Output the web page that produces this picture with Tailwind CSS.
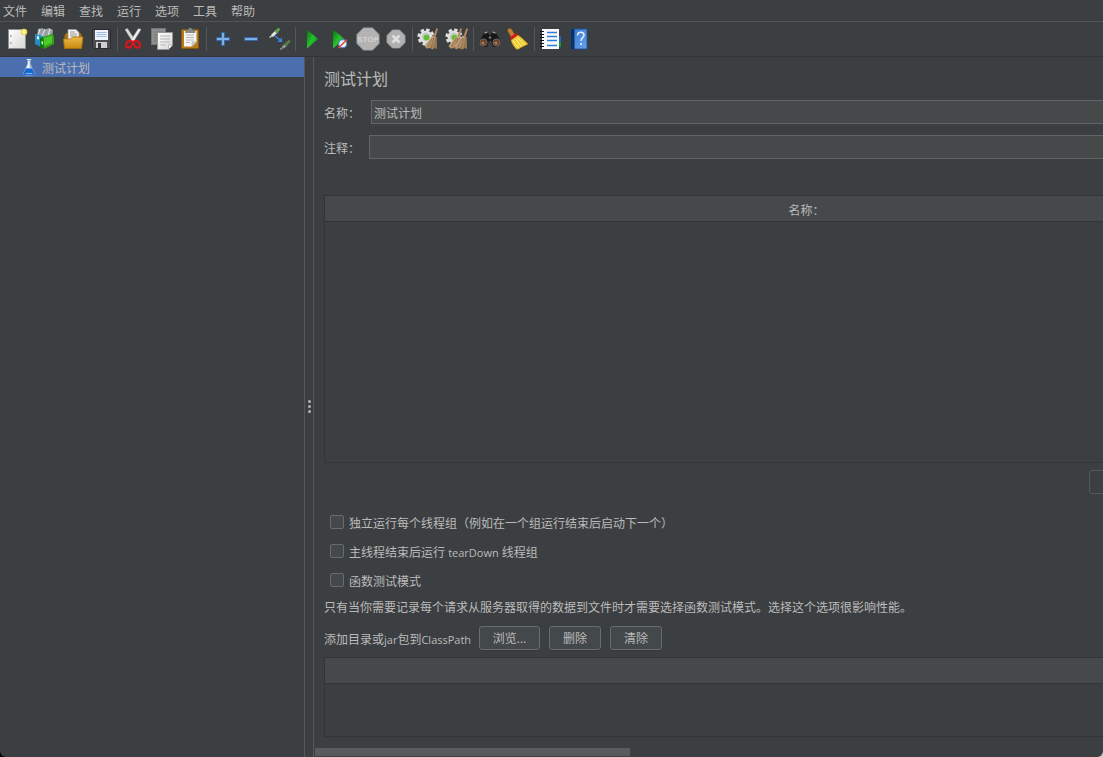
<!DOCTYPE html>
<html lang="zh-CN">
<head>
<meta charset="utf-8">
<meta name="viewport" content="width=device-width, initial-scale=1">
<title>测试计划</title>
<script src="https://cdn.jsdelivr.net/npm/@tailwindcss/browser@4"></script>
</head>
<body class="bg-linear-to-r from-black from-50% to-[#c8c8c8] to-50% font-['Open_Sans','Noto_Sans_CJK_SC',sans-serif] text-xs text-[#bbbbbb]">
<div class="flex h-screen flex-col overflow-hidden rounded-b-md bg-[#3c3f41]">

  <nav class="flex h-[22px] shrink-0 items-center gap-[14px] border-b border-[#515354] pt-[2px] pl-[3px]">
    <button type="button">文件</button>
    <button type="button">编辑</button>
    <button type="button">查找</button>
    <button type="button">运行</button>
    <button type="button">选项</button>
    <button type="button">工具</button>
    <button type="button">帮助</button>
  </nav>

  <div role="toolbar" aria-label="工具栏" class="flex shrink-0 items-center border-b border-[#323435] px-[3px] py-[3px]">
    <svg class="absolute size-0" aria-hidden="true">
      <defs>
        <linearGradient id="paper" x1="0" y1="0" x2="1" y2="1"><stop offset="0" stop-color="#fff"/><stop offset="1" stop-color="#d6d6d6"/></linearGradient>
        <linearGradient id="gold" x1="0" y1="0" x2="0" y2="1"><stop offset="0" stop-color="#ecb848"/><stop offset="1" stop-color="#c98a10"/></linearGradient>
        <linearGradient id="green" x1="0" y1="0" x2="1" y2="1"><stop offset="0" stop-color="#0a6e10"/><stop offset=".5" stop-color="#25c32c"/><stop offset="1" stop-color="#067a0c"/></linearGradient>
        <linearGradient id="straw" x1="0" y1="0" x2="1" y2="1"><stop offset="0" stop-color="#d9bd94"/><stop offset="1" stop-color="#94704a"/></linearGradient>
        <linearGradient id="blue" x1="0" y1="0" x2="1" y2="1"><stop offset="0" stop-color="#3577cf"/><stop offset="1" stop-color="#67a2ec"/></linearGradient>
        <g id="gear">
          <circle cx="11" cy="12" r="6.500" fill="#dfe1df"/>
          <circle cx="11" cy="12" r="7.300" fill="none" stroke="#dfe1df" stroke-width="2.600" stroke-dasharray="3.400 2.330"/>
          <circle cx="11" cy="12" r="4.200" fill="#c3c8c1"/>
          <circle cx="11.500" cy="12.500" r="2.800" fill="#5cc12a"/>
        </g>
        <g id="brush">
          <path d="M21.500 3l1.500 1-2.500 8-2-1z" fill="#b08a60"/>
          <path d="M17.500 10.500l4 2 .5 11.500-2.500-1-2 1.500-2.500-1.500-3.500.5-2-2.500z" fill="url(#straw)"/>
          <path d="M17.500 13l-5 9M19 13l-3 10M20.500 13.500l-1 9.500" stroke="#7d5b36" stroke-width=".6" fill="none"/>
        </g>
      </defs>
    </svg>

    <button type="button" aria-label="新建" class="size-7 shrink-0"><svg viewBox="0 0 28 28" class="size-7">
      <rect x="5.500" y="4.500" width="17" height="19" fill="url(#paper)" stroke="#8e8f88"/>
      <path d="M7 10h1.500v2H7zM7 17h1.500v2H7z" fill="#aaa"/>
      <circle cx="21" cy="7" r="3.300" fill="#f0dc50"/><circle cx="21" cy="7" r="1.500" fill="#fffbd0"/>
    </svg></button>
    <button type="button" aria-label="模板" class="size-7 shrink-0"><svg viewBox="0 0 28 28" class="size-7">
      <path d="M7 4l5-1 1 2 5-2 4 2-1 8H6z" fill="#9aa1a4"/><path d="M9 4l-2 6M14 4l-3 7M19 4l-2 7" stroke="#d6dcde" stroke-width="1.200"/>
      <path d="M4 9l8 2v12l-8-4z" fill="#2190c8"/><path d="M6 11l2 .5v3L6 14z" fill="#eaf6fc"/>
      <path d="M9 13l4-1v11.500L9 22z" fill="#0d7a0d"/>
      <path d="M12 12l9-3 2 2v8l-10 5z" fill="#2fa016"/><path d="M13 13l8-2.500V18l-8 3z" fill="#4fc92a"/><path d="M10.500 16l1.500.500v3l-1.500-.500z" fill="#e5f8dc"/>
    </svg></button>
    <button type="button" aria-label="打开" class="size-7 shrink-0"><svg viewBox="0 0 28 28" class="size-7">
      <path d="M5.500 10l2-2h14l1.500 3v11h-17.500z" fill="#a8720c"/>
      <path d="M9 4.500h8l3 3V15H9z" fill="#f3f3f3" stroke="#999" stroke-width=".7"/>
      <path d="M11 7h5M11 9h7M11 11h7" stroke="#9a9a9a"/>
      <path d="M4.500 14h7l2-2H24l-1.500 11.500h-17z" fill="url(#gold)" stroke="#a8720c" stroke-width=".8"/>
    </svg></button>
    <button type="button" aria-label="保存" class="size-7 shrink-0"><svg viewBox="0 0 28 28" class="size-7">
      <path d="M5.500 4.500h18v19h-16l-2-2z" fill="#4b4d52" stroke="#292b30"/>
      <rect x="8" y="5" width="13" height="10" fill="#eef4fb"/><path d="M9.500 7.500h10M9.500 9.500h10M9.500 11.500h10" stroke="#9fbbdc"/>
      <rect x="9" y="17" width="11" height="6" fill="#cfcfcf"/><rect x="11" y="18" width="3" height="5" fill="#33353a"/>
    </svg></button>

    <span class="flex h-7 w-[5px] shrink-0 items-center justify-center"><span class="h-6 w-px bg-[#55585a]"></span></span>

    <button type="button" aria-label="剪切" class="size-7 shrink-0"><svg viewBox="0 0 28 28" class="size-7">
      <path d="M5 4.500L7.500 3.500 15 15l-2 2.500z" fill="#dcdedc" stroke="#9ea09e" stroke-width=".5"/>
      <path d="M21 4.500L18.500 3.500 11 15l2 2.500z" fill="#f0f1f0" stroke="#9ea09e" stroke-width=".5"/>
      <path d="M12 16.500c-3-1.500-6 .5-6 3.500 0 3.500 4.500 3.500 5.500.5l1.500-3.500zM14 16.500c3-1.500 6 .5 6 3.500 0 3.500-4.500 3.500-5.500.5L13 17z" fill="none" stroke="#d8141c" stroke-width="2.200"/>
    </svg></button>
    <button type="button" aria-label="复制" class="size-7 shrink-0"><svg viewBox="0 0 28 28" class="size-7">
      <rect x="3.500" y="3.500" width="14" height="16" fill="#8e9090" stroke="#757777"/><path d="M6 7h9M6 10h5M6 13h5M6 16h4" stroke="#747676"/>
      <path d="M9.500 7.500h15V20l-4 4.500h-11z" fill="url(#paper)" stroke="#96968f"/>
      <path d="M12 11h10M12 14h10M12 17h10M12 20h6" stroke="#b6b6b6"/><path d="M24.500 20h-4v4.500z" fill="#fff" stroke="#a5a5a5" stroke-width=".7"/>
    </svg></button>
    <button type="button" aria-label="粘贴" class="size-7 shrink-0"><svg viewBox="0 0 28 28" class="size-7">
      <rect x="5.500" y="4.500" width="17" height="19" rx="1" fill="#b97a18" stroke="#8a5608"/>
      <path d="M8 6h12.500v11L16 21.500H8z" fill="#f5f5f3"/><path d="M20.500 17L16 21.500V17z" fill="#cfcfcf" stroke="#999" stroke-width=".5"/>
      <path d="M10 10h8M10 12.500h8M10 15h8M10 17.500h4" stroke="#b5b5b5"/>
      <path d="M9.500 7.500l1-3h2l.5-1.500h2.500l.5 1.500h2l1 3z" fill="#888a85" stroke="#62645f" stroke-width=".6"/>
    </svg></button>

    <span class="flex h-7 w-[5px] shrink-0 items-center justify-center"><span class="h-6 w-px bg-[#55585a]"></span></span>

    <button type="button" aria-label="展开全部" class="size-7 shrink-0"><svg viewBox="0 0 28 28" class="size-7">
      <path d="M12.500 7.500h3v5h5v3h-5v5h-3v-5h-5v-3h5z" fill="#7fb0e4" stroke="#3465a8"/>
    </svg></button>
    <button type="button" aria-label="折叠全部" class="size-7 shrink-0"><svg viewBox="0 0 28 28" class="size-7">
      <rect x="7.500" y="12.500" width="13" height="3" fill="#7fb0e4" stroke="#3465a8"/>
    </svg></button>
    <button type="button" aria-label="切换" class="size-7 shrink-0"><svg viewBox="0 0 28 28" class="size-7">
      <path d="M4.500 12.500l3-2" stroke="#d8d8d8" stroke-width="1.300"/><path d="M7 11l5-5" stroke="#e3eadf" stroke-width="3"/><path d="M11.500 6.500l2-2" stroke="#66a04a" stroke-width="3" stroke-linecap="round"/>
      <path d="M10 11l5 4" stroke="#3d86e8" stroke-width="1.500"/><path d="M17 12.500V17h-4.500z" fill="#3d86e8"/>
      <g opacity=".6"><path d="M15 24.500l3-2" stroke="#d8d8d8" stroke-width="1.300"/><path d="M18 22.500l4-4" stroke="#d0d6cc" stroke-width="3"/><path d="M21 19.500l3-3" stroke="#66a04a" stroke-width="3" stroke-linecap="round"/></g>
    </svg></button>

    <span class="flex h-7 w-[5px] shrink-0 items-center justify-center"><span class="h-6 w-px bg-[#55585a]"></span></span>

    <button type="button" aria-label="启动" class="size-7 shrink-0"><svg viewBox="0 0 28 28" class="size-7">
      <path d="M9 4.500L20 14 9 23.500z" fill="url(#green)"/>
    </svg></button>
    <button type="button" aria-label="不停顿开始" class="size-7 shrink-0"><svg viewBox="0 0 28 28" class="size-7">
      <path d="M7 4.500L18.500 14 7 23.500z" fill="url(#green)"/>
      <circle cx="16.700" cy="18.700" r="4" fill="#e9eff8" stroke="#5b86c4" stroke-width="1.200"/><path d="M12.500 23l8.500-8.500" stroke="#e04434" stroke-width="1.400"/>
    </svg></button>
    <button type="button" aria-label="停止" disabled class="size-7 shrink-0"><svg viewBox="0 0 28 28" class="size-7">
      <path d="M9.500 3h9L25 9.500v9L18.500 25h-9L3 18.500v-9z" fill="#b3b3b3" stroke="#a3a3a3"/>
      <text x="14" y="17" text-anchor="middle" font-family="Liberation Sans" font-size="8" font-weight="700" fill="#d2d2d2">STOP</text>
    </svg></button>
    <button type="button" aria-label="关闭" disabled class="size-7 shrink-0"><svg viewBox="0 0 28 28" class="size-7">
      <path d="M10.500 5h7L23 10.500v7L17.500 23h-7L5 17.500v-7z" fill="#b1b1b1" stroke="#a1a1a1" stroke-width=".8"/>
      <path d="M10.500 10.500l7 7M17.500 10.500l-7 7" stroke="#e0e0e0" stroke-width="2.600"/>
    </svg></button>

    <span class="flex h-7 w-[5px] shrink-0 items-center justify-center"><span class="h-6 w-px bg-[#55585a]"></span></span>

    <button type="button" aria-label="清除" class="size-7 shrink-0"><svg viewBox="0 0 28 28" class="size-7">
      <use href="#gear"/><use href="#brush"/>
    </svg></button>
    <button type="button" aria-label="清除全部" class="size-7 shrink-0"><svg viewBox="0 0 28 28" class="size-7">
      <use href="#gear"/><use href="#brush" x="-4"/><use href="#brush" x="2"/>
    </svg></button>

    <span class="flex h-7 w-[5px] shrink-0 items-center justify-center"><span class="h-6 w-px bg-[#55585a]"></span></span>

    <button type="button" aria-label="搜索" class="size-7 shrink-0"><svg viewBox="0 0 28 28" class="size-7">
      <path d="M8 8l4-1 1 3h2l1-3 4 1 5 9-4 5h-4l-2-6h-2l-2 6H7l-4-5z" fill="#171717"/>
      <path d="M8.500 8l3-.8M16.500 7.200l3 .8" stroke="#9a9a9a" stroke-width="1.300"/>
      <circle cx="7.500" cy="17.500" r="3.600" fill="#6b4029" stroke="#6a6a6a"/><circle cx="20.500" cy="17.500" r="3.600" fill="#6b4029" stroke="#6a6a6a"/>
      <circle cx="7" cy="18" r="1.500" fill="#b07a55"/><circle cx="20" cy="18" r="1.500" fill="#b07a55"/><circle cx="14" cy="12.500" r="1.300" fill="#777"/>
    </svg></button>
    <button type="button" aria-label="重置搜索" class="size-7 shrink-0"><svg viewBox="0 0 28 28" class="size-7">
      <path d="M3.500 5.500C4 3 7 3 8 5l3 5-4 2z" fill="#c08034" stroke="#8d5413" stroke-width=".6"/>
      <path d="M7 15l7-5c4 3 7 6 10 9l-11 5.500c-3-2-5-6-6-9.500z" fill="#efcb35" stroke="#b8900c" stroke-width=".6"/>
      <path d="M9 15.500l6 8M11.500 14l6 7.500M13.500 12.500l7 7.500" stroke="#fff09a" stroke-width="1" fill="none"/>
      <path d="M6 12.500l6-4.500 2 2-7 5z" fill="#d8191c"/>
    </svg></button>

    <span class="flex h-7 w-[5px] shrink-0 items-center justify-center"><span class="h-6 w-px bg-[#55585a]"></span></span>

    <button type="button" aria-label="函数助手" class="size-7 shrink-0"><svg viewBox="0 0 28 28" class="size-7">
      <path d="M20 11h4v7h-4z" fill="#1e62e0"/><path d="M20 17h4v5h-4z" fill="#189a28"/>
      <rect x="5" y="4" width="17" height="20" fill="#fafafa"/>
      <path d="M10 7.500h10M10 11.500h10M10 15.500h10M10 20.500h10" stroke="#2f7bdc" stroke-width="1.400"/>
      <path d="M3 6.500h4M3 9.500h4M3 12.500h4M3 15.500h4M3 18.500h4M3 21.500h4" stroke="#111" stroke-width="1.200"/>
    </svg></button>
    <button type="button" aria-label="帮助" class="size-7 shrink-0"><svg viewBox="0 0 28 28" class="size-7">
      <rect x="6" y="4" width="16" height="20" fill="url(#blue)" stroke="#1c4c8e" stroke-width=".8"/><path d="M6 4h3.500v20H6z" fill="#0d3268"/>
      <path d="M12.500 10.500c0-4.500 6.500-4 6.500-.5 0 2.800-3 2.500-3 6" fill="none" stroke="#e6f0fc" stroke-width="1.500"/><circle cx="16" cy="19" r="1.100" fill="#e6f0fc"/>
    </svg></button>
  </div>

  <div class="flex min-h-0 flex-1">
    <aside class="w-[304px] shrink-0">
      <ul role="tree" aria-label="测试计划树">
        <li role="treeitem" aria-selected="true" class="flex h-5 items-center gap-[6px] bg-[#4b6eaf] pl-[22px]">
          <svg viewBox="0 0 14 18" class="h-[18px] w-[14px]" aria-hidden="true">
            <path d="M5.500 2h3v4l4.500 10c0 .8-1.500 1.300-6 1.300s-6-.5-6-1.300l4.500-10z" fill="#a9c4e6" stroke="#7f9cc4" stroke-width=".6"/>
            <path d="M3.800 10.500h6.400l2.600 5.700c0 .5-1.300.8-5.800.8s-5.800-.3-5.800-.8z" fill="#1568d0"/>
            <path d="M6 3h1.500v7H4.500l1.500-4z" fill="#f3f7fb"/><path d="M4.800 1.500h4.400" stroke="#dfe8f2"/><path d="M3.500 15.500h7" stroke="#7db4f2" stroke-width="1.200"/>
          </svg>
          <span class="pt-[3px]">测试计划</span>
        </li>
      </ul>
    </aside>

    <div role="separator" aria-orientation="vertical" class="flex w-[10px] shrink-0 flex-col items-center justify-center gap-[2px] border-x border-[#555759] pb-[2px]">
      <span class="size-[3px] rounded-full bg-[#b4b4b4]"></span>
      <span class="size-[3px] rounded-full bg-[#b4b4b4]"></span>
      <span class="size-[3px] rounded-full bg-[#b4b4b4]"></span>
    </div>

    <main class="flex min-w-0 flex-1 flex-col overflow-hidden">
      <div class="flex min-h-0 min-w-[1938px] flex-1 flex-col pt-3 pl-[10px]">
        <h1 class="text-base leading-5">测试计划</h1>
        <div class="mt-[11px] flex h-6 items-center">
          <label for="name" class="w-[47px] pt-[3px]">名称：</label>
          <input id="name" type="text" value="测试计划" class="h-6 min-w-0 flex-1 border border-[#646464] bg-[#45494a] px-[2px] pt-[2px] outline-none">
        </div>
        <div class="mt-[11px] flex h-6 items-center">
          <label for="comment" class="w-[45px] pt-[3px]">注释：</label>
          <input id="comment" type="text" class="h-6 min-w-0 flex-1 border border-[#646464] bg-[#45494a] px-[2px] pt-[2px] outline-none">
        </div>

        <div class="mt-9 min-h-0 flex-1 border border-[#323537]">
          <table class="w-full table-fixed border-separate border-spacing-0">
            <thead>
              <tr>
                <th scope="col" class="h-[26px] border-b border-[#323537] bg-[#45494b] p-0 pt-1 font-normal leading-5">名称：</th>
                <td class="h-[26px] border-b border-[#323537] bg-[#45494b] p-0"></td>
              </tr>
            </thead>
          </table>
        </div>
        <div class="mt-[7px] flex h-6 justify-center">
          <div class="w-[398px]">
            <button type="button" disabled aria-label="详细" class="h-6 w-[52px] rounded-[3px] border border-[#55585a]"></button>
          </div>
        </div>

        <div class="mt-[18px] flex flex-col gap-[9px] pl-[6px]">
          <label class="flex h-5 items-center gap-[5px]"><input type="checkbox" class="size-[14px] appearance-none rounded-xs border border-[#6b6b6b] bg-[#43494a]"><span class="pt-[3px]">独立运行每个线程组（例如在一个组运行结束后启动下一个）</span></label>
          <label class="flex h-5 items-center gap-[5px]"><input type="checkbox" class="size-[14px] appearance-none rounded-xs border border-[#6b6b6b] bg-[#43494a]"><span class="pt-[3px]">主线程结束后运行 <span class="text-[11px]">tearDown</span> 线程组</span></label>
          <label class="flex h-5 items-center gap-[5px]"><input type="checkbox" class="size-[14px] appearance-none rounded-xs border border-[#6b6b6b] bg-[#43494a]"><span class="pt-[3px]">函数测试模式</span></label>
        </div>
        <p class="mt-2 leading-5">只有当你需要记录每个请求从服务器取得的数据到文件时才需要选择函数测试模式。选择这个选项很影响性能。</p>

        <div class="mt-2 flex h-6 items-center gap-[9px]">
          <span class="w-[146px] pt-[3px] whitespace-nowrap">添加目录或<span class="text-[11px]">jar</span>包到<span class="text-[11px]">ClassPath</span></span>
          <button type="button" class="h-6 w-[61px] rounded-[3px] border border-[#6a6d6e] bg-[#43484a] pt-[2px] shadow-[0_1px_0_#36393a]">浏览...</button>
          <button type="button" class="h-6 w-[52px] rounded-[3px] border border-[#6a6d6e] bg-[#43484a] pt-[2px] shadow-[0_1px_0_#36393a]">删除</button>
          <button type="button" class="h-6 w-[52px] rounded-[3px] border border-[#6a6d6e] bg-[#43484a] pt-[2px] shadow-[0_1px_0_#36393a]">清除</button>
        </div>
        <div class="mt-[7px] h-20 border border-[#323537]">
          <div class="h-[26px] border-b border-[#323537] bg-[#45494b]"></div>
        </div>
      </div>
      <div class="mt-[11px] mb-px flex h-2 shrink-0 pl-px">
        <div class="w-2/5 bg-[#595b5d]"></div>
      </div>
    </main>
  </div>
</div>
</body>
</html>
